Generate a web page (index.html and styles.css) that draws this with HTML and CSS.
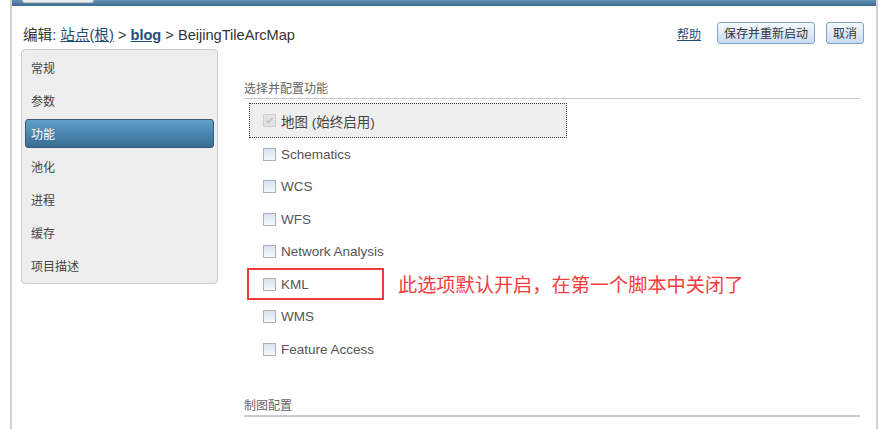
FILE: index.html
```html
<!DOCTYPE html>
<html lang="zh">
<head>
<meta charset="utf-8">
<title>BeijingTileArcMap</title>
<link rel="stylesheet" href="styles.css">
</head>
<body>
<div class="page">
  <div class="topbar"><div class="tab"></div></div>
  <div class="toolbar">
    <div class="crumbs">编辑: <a class="link" href="#">站点(根)</a> &gt; <a class="link bold" href="#">blog</a> &gt; BeijingTileArcMap</div>
    <div class="actions">
      <a class="link help" href="#">帮助</a>
      <button class="btn">保存并重新启动</button>
      <button class="btn">取消</button>
    </div>
  </div>
  <div class="body">
    <ul class="sidebar">
      <li class="nav">常规</li>
      <li class="nav">参数</li>
      <li class="nav active">功能</li>
      <li class="nav">池化</li>
      <li class="nav">进程</li>
      <li class="nav">缓存</li>
      <li class="nav">项目描述</li>
    </ul>
    <div class="main">
      <div class="section-title">选择并配置功能</div>
      <div class="options">
        <div class="opt opt-fixed"><span class="cb cb-disabled"><svg width="11" height="11" viewBox="0 0 11 11"><path d="M2.5 5.5 L4.5 7.5 L8.5 3" fill="none" stroke="#c2c2c2" stroke-width="1.6"/></svg></span><span class="lbl">地图 (始终启用)</span></div>
        <div class="opt"><span class="cb"></span><span class="lbl">Schematics</span></div>
        <div class="opt"><span class="cb"></span><span class="lbl">WCS</span></div>
        <div class="opt"><span class="cb"></span><span class="lbl">WFS</span></div>
        <div class="opt"><span class="cb"></span><span class="lbl">Network Analysis</span></div>
        <div class="opt opt-marked"><div class="mark"><span class="cb"></span><span class="lbl">KML</span></div><span class="note">此选项默认开启，在第一个脚本中关闭了</span></div>
        <div class="opt"><span class="cb"></span><span class="lbl">WMS</span></div>
        <div class="opt"><span class="cb"></span><span class="lbl">Feature Access</span></div>
      </div>
      <div class="section-title second">制图配置</div>
    </div>
  </div>
</div>
</body>
</html>
```

FILE: styles.css
```css
html, body {
  margin: 0;
  padding: 0;
  background: #fff;
  overflow: hidden;
}
body {
  font-family: "Liberation Sans", "Noto Sans CJK SC", sans-serif;
  color: #333;
}
.page {
  margin-left: 10px;
  width: 864px;
  height: 429px;
  border-left: 2px solid #d2d2d2;
  border-right: 2px solid #d2d2d2;
}
.topbar {
  height: 6px;
  background: linear-gradient(to bottom, #6790b5, #3d6b93);
  display: flex;
  align-items: flex-start;
}
.tab {
  margin-left: 10px;
  width: 70px;
  height: 2px;
  background: #eeeeee;
  border: 1px solid #b8c4d0;
  border-top: none;
  border-radius: 0 0 3px 3px;
}
.toolbar {
  display: flex;
  align-items: center;
  justify-content: space-between;
  padding: 16px 12px 0 11px;
  height: 22px;
}
.crumbs {
  font-size: 14.6px;
  color: #333;
  font-family: "Liberation Sans", "Noto Sans CJK SC", sans-serif;
}
.link {
  color: #1d4e7c;
  text-decoration: underline;
}
.bold { font-weight: bold; }
.actions {
  display: flex;
  align-items: center;
}
.help {
  font-size: 12px;
  margin-right: 16px;
  font-family: "Noto Sans CJK SC", sans-serif;
}
.btn {
  height: 22px;
  padding: 0 6px;
  font-family: "Noto Sans CJK SC", sans-serif;
  font-size: 12px;
  color: #333;
  border: 1px solid #7fa3c8;
  border-radius: 3px;
  background: linear-gradient(to bottom, #f3f8fe, #c8dcf2);
  margin-left: 11px;
  line-height: 20px;
}
.btn:first-of-type { margin-left: 0; }
.body {
  display: flex;
  align-items: flex-start;
  margin-top: 5px;
}
.sidebar {
  list-style: none;
  margin: 0 0 0 9px;
  padding: 3px;
  width: 189px;
  background: #eeeeee;
  border: 1px solid #cccccc;
  border-radius: 4px;
  display: flex;
  flex-direction: column;
  gap: 4px;
}
.nav {
  height: 29px;
  line-height: 29px;
  padding-left: 6px;
  font-size: 12px;
  color: #444;
  font-family: "Noto Sans CJK SC", sans-serif;
  border-radius: 3px;
  box-sizing: border-box;
}
.nav.active {
  color: #fff;
  background: linear-gradient(to bottom, #5f9fc7, #4a86b0 50%, #3a6c92);
  border: 1px solid #355a7a;
  padding-left: 5px;
  line-height: 27px;
}
.main {
  margin-left: 26px;
  width: 616px;
  padding-top: 31px;
}
.section-title {
  font-size: 12px;
  line-height: 16px;
  color: #666;
  font-family: "Noto Sans CJK SC", sans-serif;
  padding-bottom: 2px;
  border-bottom: 1px solid #c8c8c8;
}
.section-title.second {
  margin-top: 31px;
  border-bottom-width: 2px;
  border-bottom-color: #cccccc;
}
.options {
  margin-top: 4px;
  display: flex;
  flex-direction: column;
}
.opt {
  height: 32.5px;
  display: flex;
  align-items: center;
  padding-left: 19px;
  box-sizing: border-box;
}
.opt-fixed {
  height: 35px;
  margin-left: 5px;
  width: 318px;
  padding-left: 13px;
  background: #efefef;
  border: 1px dotted #333;
}
.opt-marked {
  padding-left: 3px;
}
.mark {
  width: 137px;
  height: 32px;
  box-sizing: border-box;
  border: 2px solid #f23a3a;
  display: flex;
  align-items: center;
  padding-left: 14px;
}
.note {
  margin-left: 14px;
  font-size: 19.2px;
  color: #f43c3c;
  font-family: "Noto Sans CJK SC", sans-serif;
  line-height: 1;
}
.cb {
  width: 13px;
  height: 13px;
  box-sizing: border-box;
  border: 1px solid #a9b1bd;
  background: linear-gradient(to bottom, #d9e2ec, #f7f9fb);
  margin-right: 5px;
  display: flex;
  align-items: center;
  justify-content: center;
  flex: none;
}
.cb-disabled {
  border-color: #d0d0d0;
  background: #e2e2e2;
}
.lbl {
  font-size: 13.5px;
  color: #555;
  font-family: "Liberation Sans", "Noto Sans CJK SC", sans-serif;
}
.opt-fixed .lbl {
  color: #444;
}
```
